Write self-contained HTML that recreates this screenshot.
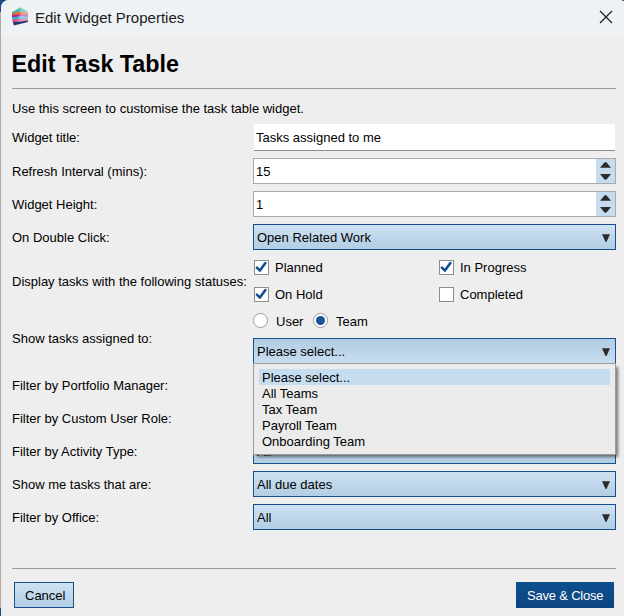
<!DOCTYPE html>
<html><head><meta charset="utf-8">
<style>
*{margin:0;padding:0;box-sizing:border-box}
html,body{width:624px;height:616px;overflow:hidden;background:#1b4a86}
body{position:relative;font-family:"Liberation Sans",sans-serif;font-size:13px;color:#000}
.win{position:absolute;left:1px;top:0;width:623px;height:616px;background:#eeeeee;border-radius:8px 0 0 0;overflow:hidden}
.edge{position:absolute;left:0;top:12px;width:1px;height:596px;background:#b0aaaa}
.tb{position:absolute;left:0;top:0;width:623px;height:36px;background:#eef2f4}
.t{position:absolute;white-space:nowrap;line-height:15px;height:15px}
.hr{position:absolute;height:1px;background:#9b9b9b}
.tf{position:absolute;background:#fff;border-bottom:1px solid #8c8c8c}
.sp{position:absolute;background:#fff;border:1px solid #aaaaaa}
.spb{position:absolute;right:0;top:0;width:19px;height:100%;background:#c6dbee}
.cb{position:absolute;border:1px solid #174f8c;background:linear-gradient(#cfe2f3,#b2cde4)}
.cb.open{background:linear-gradient(#b1cce3,#c8ddf0)}
.arr{position:absolute;right:5px;top:9px}
.chk{position:absolute;width:15px;height:15px;border:1px solid #8d8d8d;background:#fff}
.rad{position:absolute;width:15px;height:15px;border:1px solid #9a9a9a;border-radius:50%;background:#fff}
.popup{position:absolute;left:253px;top:363px;width:363px;height:92px;background:#ebebeb;border:1px solid #9a9a9a;box-shadow:3px 3px 3px -1px rgba(0,0,0,0.5)}
.hl{position:absolute;left:5px;top:5px;width:351px;height:16px;background:#c6dcef}
.btn{position:absolute;border:1px solid #174f8c;background:linear-gradient(#cfe2f3,#b2cde4)}
.save{position:absolute;background:linear-gradient(#0f4f8e,#0b4581);color:#fff}
</style></head><body>
<div class="win">
  <div class="tb"></div>
</div>
<div class="edge"></div>
<div style="position:absolute;left:622px;top:0;width:2px;height:1px;background:#3a6aa0"></div>

<!-- title bar content -->
<svg style="position:absolute;left:11px;top:6px" width="19" height="22" viewBox="11 6 19 22">
  <defs>
   <linearGradient id="g1" x1="0" x2="1"><stop offset="0" stop-color="#2fb3a3"/><stop offset="0.45" stop-color="#3dbcae"/><stop offset="0.55" stop-color="#86d3cd"/><stop offset="1" stop-color="#9adbd6"/></linearGradient>
   <linearGradient id="g2" x1="0" x2="1"><stop offset="0" stop-color="#ee5a2a"/><stop offset="0.45" stop-color="#f06430"/><stop offset="0.6" stop-color="#f59a72"/><stop offset="1" stop-color="#f6a47e"/></linearGradient>
   <linearGradient id="g3" x1="0" x2="1"><stop offset="0" stop-color="#a8207c"/><stop offset="0.4" stop-color="#b0287f"/><stop offset="0.55" stop-color="#c682bd"/><stop offset="1" stop-color="#cc8cc4"/></linearGradient>
   <linearGradient id="g4" x1="0" x2="1"><stop offset="0" stop-color="#1ea6da"/><stop offset="0.35" stop-color="#3aaee0"/><stop offset="0.5" stop-color="#88caee"/><stop offset="1" stop-color="#92cff0"/></linearGradient>
   <linearGradient id="g5" x1="0" x2="1"><stop offset="0" stop-color="#d83a70"/><stop offset="0.3" stop-color="#e45a88"/><stop offset="0.45" stop-color="#f28aac"/><stop offset="1" stop-color="#f494b2"/></linearGradient>
  </defs>
  <polygon points="12,12.3 20.8,7.3 28,11.8 28,13 20.8,11.8 12,13.4" fill="url(#g1)"/>
  <polygon points="12,13.2 20.8,11.6 28,12.8 28,15 20.8,14.2 12,15.5" fill="url(#g2)"/>
  <polygon points="12,15.3 20.8,14 28,14.8 28,16.9 20.8,16.4 12,17.5" fill="url(#g3)"/>
  <polygon points="12.2,17.3 20.8,16.2 28,16.7 28,19 20.8,19 12.4,19.8" fill="url(#g4)"/>
  <polygon points="12.4,19.6 20.8,18.8 28,18.8 28,20.8 20.8,21.6 12.8,22.4" fill="url(#g5)"/>
  <polygon points="12.8,22.2 20.8,21.4 28,20.6 27.8,22 20.8,23.8 14,25.4" fill="#1b3677"/>
</svg>
<div class="t" style="left:35px;top:9px;font-size:15px;line-height:17px;height:17px;color:#1a1a1a">Edit Widget Properties</div>
<svg style="position:absolute;left:599px;top:10px" width="14" height="14" viewBox="0 0 14 14">
  <path d="M1 1 L13 13 M13 1 L1 13" stroke="#1a1a1a" stroke-width="1.2"/>
</svg>

<div class="t" style="left:11.5px;top:51px;font-size:23.3px;font-weight:bold;line-height:27px;height:27px">Edit Task Table</div>
<div class="hr" style="left:12px;top:88px;width:604px"></div>
<div class="t" style="left:12px;top:101px">Use this screen to customise the task table widget.</div>

<div class="t" style="left:12px;top:130px">Widget title:</div>
<div class="tf" style="left:254px;top:124px;width:361px;height:27px"></div>
<div class="t" style="left:256px;top:130px">Tasks assigned to me</div>

<div class="t" style="left:12px;top:164px">Refresh Interval (mins):</div>
<div class="sp" style="left:253px;top:158px;width:363px;height:26px"><div class="spb">
<svg style="position:absolute;left:4px;top:3px" width="11" height="18" viewBox="0 0 11 18"><polygon points="4.6,0.3 6.4,0.3 11,5.8 0,5.8" fill="#2b2b2b"/><polygon points="0,12 11,12 6.5,17.5 4.5,17.5" fill="#2b2b2b"/></svg>
</div></div>
<div class="t" style="left:256px;top:164px">15</div>

<div class="t" style="left:12px;top:197px">Widget Height:</div>
<div class="sp" style="left:253px;top:191px;width:363px;height:26px"><div class="spb">
<svg style="position:absolute;left:4px;top:3px" width="11" height="18" viewBox="0 0 11 18"><polygon points="4.6,0.3 6.4,0.3 11,5.8 0,5.8" fill="#2b2b2b"/><polygon points="0,12 11,12 6.5,17.5 4.5,17.5" fill="#2b2b2b"/></svg>
</div></div>
<div class="t" style="left:256px;top:197px">1</div>

<div class="t" style="left:12px;top:230px">On Double Click:</div>
<div class="cb" style="left:253px;top:224px;width:363px;height:26px">
<svg class="arr" width="8" height="9" viewBox="0 0 8 9"><polygon points="0,0.3 8,0.3 4.5,8 3.5,8" fill="#2b2b2b"/></svg></div>
<div class="t" style="left:257px;top:230px">Open Related Work</div>

<div class="t" style="left:12px;top:274px">Display tasks with the following statuses:</div>
<div class="chk" style="left:254px;top:260px"><svg style="position:absolute;left:-1px;top:-1px" width="15" height="15" viewBox="0 0 15 15"><path d="M2.9 7.6 L5.9 10.6 L11.4 3" fill="none" stroke="#14508f" stroke-width="2.6" stroke-linecap="round" stroke-linejoin="round"/></svg></div>
<div class="t" style="left:275px;top:260px">Planned</div>
<div class="chk" style="left:254px;top:287px"><svg style="position:absolute;left:-1px;top:-1px" width="15" height="15" viewBox="0 0 15 15"><path d="M2.9 7.6 L5.9 10.6 L11.4 3" fill="none" stroke="#14508f" stroke-width="2.6" stroke-linecap="round" stroke-linejoin="round"/></svg></div>
<div class="t" style="left:275px;top:287px">On Hold</div>
<div class="chk" style="left:439px;top:260px"><svg style="position:absolute;left:-1px;top:-1px" width="15" height="15" viewBox="0 0 15 15"><path d="M2.9 7.6 L5.9 10.6 L11.4 3" fill="none" stroke="#14508f" stroke-width="2.6" stroke-linecap="round" stroke-linejoin="round"/></svg></div>
<div class="t" style="left:460px;top:260px">In Progress</div>
<div class="chk" style="left:439px;top:287px"></div>
<div class="t" style="left:460px;top:287px">Completed</div>

<div class="rad" style="left:253px;top:313px"></div>
<div class="t" style="left:276px;top:314px">User</div>
<div class="rad" style="left:313px;top:313px"><div style="position:absolute;left:2px;top:2px;width:9px;height:9px;border-radius:50%;background:#16539a"></div></div>
<div class="t" style="left:336px;top:314px">Team</div>

<div class="t" style="left:12px;top:331px">Show tasks assigned to:</div>
<div class="cb open" style="left:253px;top:338px;width:363px;height:26px">
<svg class="arr" width="8" height="9" viewBox="0 0 8 9"><polygon points="0,0.3 8,0.3 4.5,8 3.5,8" fill="#2b2b2b"/></svg></div>
<div class="t" style="left:257px;top:344px">Please select...</div>

<div class="t" style="left:12px;top:378px">Filter by Portfolio Manager:</div>
<div class="cb" style="left:253px;top:371px;width:363px;height:26px"></div>
<div class="t" style="left:12px;top:411px">Filter by Custom User Role:</div>
<div class="cb" style="left:253px;top:404px;width:363px;height:26px"></div>
<div class="t" style="left:12px;top:444px">Filter by Activity Type:</div>
<div class="cb" style="left:253px;top:438px;width:363px;height:26px"></div>
<div class="t" style="left:257px;top:444px">All</div>

<div class="popup">
  <div class="hl"></div>
  <div class="t" style="left:8px;top:6px">Please select...</div>
  <div class="t" style="left:8px;top:22px">All Teams</div>
  <div class="t" style="left:8px;top:38px">Tax Team</div>
  <div class="t" style="left:8px;top:54px">Payroll Team</div>
  <div class="t" style="left:8px;top:70px">Onboarding Team</div>
</div>

<div class="t" style="left:12px;top:477px">Show me tasks that are:</div>
<div class="cb" style="left:253px;top:471px;width:363px;height:26px">
<svg class="arr" width="8" height="9" viewBox="0 0 8 9"><polygon points="0,0.3 8,0.3 4.5,8 3.5,8" fill="#2b2b2b"/></svg></div>
<div class="t" style="left:257px;top:477px">All due dates</div>

<div class="t" style="left:12px;top:510px">Filter by Office:</div>
<div class="cb" style="left:253px;top:504px;width:363px;height:26px">
<svg class="arr" width="8" height="9" viewBox="0 0 8 9"><polygon points="0,0.3 8,0.3 4.5,8 3.5,8" fill="#2b2b2b"/></svg></div>
<div class="t" style="left:257px;top:510px">All</div>

<div class="hr" style="left:12px;top:568px;width:604px"></div>
<div class="btn" style="left:14px;top:582px;width:60px;height:26px"></div>
<div class="t" style="left:25px;top:588px">Cancel</div>
<div class="save" style="left:516px;top:582px;width:98px;height:26px"></div>
<div class="t" style="left:527px;top:588px;color:#fff;letter-spacing:-0.2px">Save &amp; Close</div>
</body></html>
